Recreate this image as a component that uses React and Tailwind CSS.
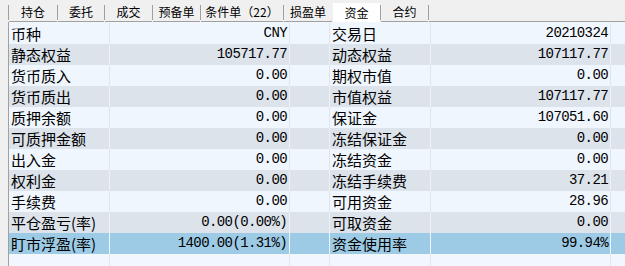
import React from "react";

const tabs = [
  { name: "持仓", w: "w-[48px]" },
  { name: "委托", w: "w-[46px]" },
  { name: "成交", w: "w-[47px]" },
  { name: "预备单", w: "w-[47px]" },
  { name: "条件单（22）", w: "w-[82px]" },
  { name: "损盈单", w: "w-[48px]" },
  { name: "资金", w: "w-[47px]", active: true },
  { name: "合约", w: "w-[47px]" },
];

const rows = [
  ["币种", "CNY", "交易日", "20210324"],
  ["静态权益", "105717.77", "动态权益", "107117.77"],
  ["货币质入", "0.00", "期权市值", "0.00"],
  ["货币质出", "0.00", "市值权益", "107117.77"],
  ["质押余额", "0.00", "保证金", "107051.60"],
  ["可质押金额", "0.00", "冻结保证金", "0.00"],
  ["出入金", "0.00", "冻结资金", "0.00"],
  ["权利金", "0.00", "冻结手续费", "37.21"],
  ["手续费", "0.00", "可用资金", "28.96"],
  ["平仓盈亏(率)", "0.00(0.00%)", "可取资金", "0.00"],
  ["盯市浮盈(率)", "1400.00(1.31%)", "资金使用率", "99.94%"],
];

function rowStyle(i) {
  if (i === 10) return { bg: "bg-[#9dcbe6]", line: "bg-[#eef5fb]" };
  if (i % 2 === 1) return { bg: "bg-[#dce3eb]", line: "bg-[#eef2f7]" };
  return { bg: "bg-[#f0f6fd]", line: "bg-[#dfe5ec]" };
}

function Row({ cells, i }) {
  const { bg, line } = rowStyle(i);
  const label = "px-[2px] text-[15px] whitespace-nowrap overflow-hidden";
  const num = "px-[2px] text-right text-[14px] tracking-[-0.6px] whitespace-nowrap font-['Liberation_Mono',monospace]";
  return (
    <div className={`flex h-[21px] items-center leading-[21px] ${bg}`}>
      <div className={`w-[100px] ${label}`}>{cells[0]}</div>
      <div className={`w-px h-full ${line}`} />
      <div className={`w-[179px] ${num}`}>{cells[1]}</div>
      <div className={`w-px h-full ${line}`} />
      <div className="w-[39px]" />
      <div className={`w-px h-full ${line}`} />
      <div className={`w-[100px] ${label}`}>{cells[2]}</div>
      <div className={`w-px h-full ${line}`} />
      <div className={`w-[179px] ${num}`}>{cells[3]}</div>
      <div className={`w-px h-full ${line}`} />
      <div className="flex-1" />
    </div>
  );
}

export default function App() {
  return (
    <div className="w-[625px] h-[266px] bg-[#f0f0f0] flex flex-col overflow-hidden text-black font-['Noto_Sans_CJK_SC','Noto_Sans',sans-serif]">
      <div className="flex h-[22px] items-end">
        <div className="w-[8px] h-full" />
        {tabs.map((t) => (
          <React.Fragment key={t.name}>
            <div className={`w-px h-[15px] mb-[2px] ${t.active ? "bg-transparent" : "bg-[#a0a0a0]"}`} />
            <div
              className={`${t.w} h-[19px] flex items-center justify-center text-[12px] leading-none ${
                t.active ? "bg-white" : "border-b border-[#a0a0a0]"
              }`}
            >
              {t.name}
            </div>
          </React.Fragment>
        ))}
        <div className="w-px h-[15px] mb-[2px] bg-[#a0a0a0]" />
        <div className="flex-1 h-[19px] border-b border-[#a0a0a0]" />
      </div>
      <div className="flex flex-1 min-h-0">
        <div className="w-[8px]" />
        <div className="w-px bg-[#a0a0a0]" />
        <div className="flex-1 flex flex-col pt-px bg-[#f2f7fd]">
          {rows.map((r, i) => (
            <Row key={r[0]} cells={r} i={i} />
          ))}
          <div className="flex flex-1">
            <div className="w-[100px]" />
            <div className="w-px bg-[#e3e8ef]" />
            <div className="w-[179px]" />
            <div className="w-px bg-[#e3e8ef]" />
            <div className="w-[39px]" />
            <div className="w-px bg-[#e3e8ef]" />
            <div className="w-[100px]" />
            <div className="w-px bg-[#e3e8ef]" />
            <div className="w-[179px]" />
            <div className="w-px bg-[#e3e8ef]" />
          </div>
        </div>
      </div>
    </div>
  );
}
